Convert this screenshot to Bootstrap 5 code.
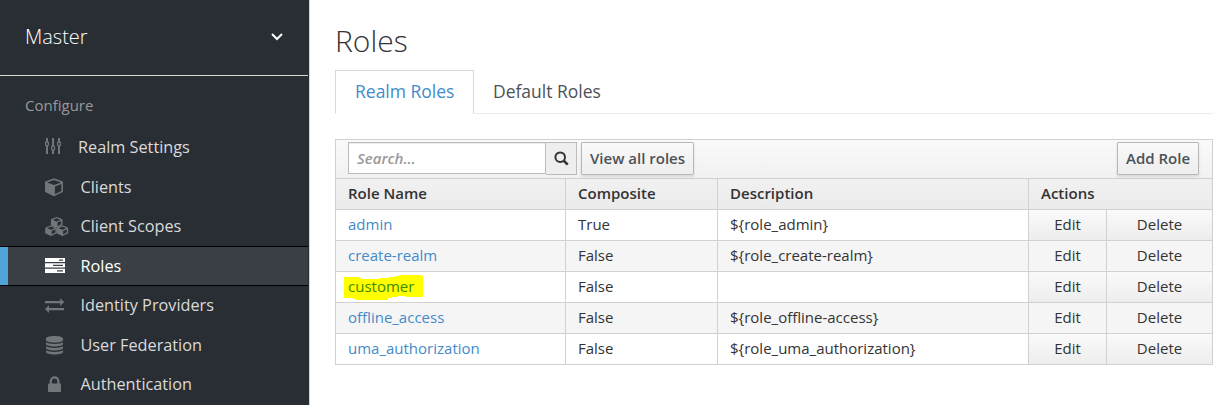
<!DOCTYPE html>
<html lang="en">
<head>
<meta charset="utf-8">
<title>Roles</title>
<meta name="viewport" content="width=device-width, initial-scale=1">
<link href="https://cdn.jsdelivr.net/npm/bootstrap@5.3.0/dist/css/bootstrap.min.css" rel="stylesheet">
<style>
  body { font-family: "Open Sans", sans-serif; font-size: 15px; line-height: 20px; color: #333; height: 405px; overflow: hidden; background: #fff; }
  a { text-decoration: none; }
  .side { width: 310px; height: 405px; background: #292e34; border-right: 1px solid #d1d1d1; padding-right: 1px; }
  .realm { height: 76px; border-bottom: 1px solid #d3dccf; padding: 0 24px 2px 25px; font-size: 20px; font-weight: 300; color: #fff; }
  .side-title { font-size: 15px; color: #999; padding: 18px 0 0 25px; height: 51px; line-height: 22px; }
  .side .nav-link { height: 39.5px; padding: 0 0 0 45px; color: #dbdada; font-size: 16.25px; line-height: 22px; }
  .side .nav-link svg { width: 24px; height: 20px; margin-right: 11.5px; fill: #72767b; flex: none; overflow: visible; }
  .side .nav-link:first-child svg { margin-right: 9px; }
  .side .nav-link:nth-child(2) { padding-top: 1px; }
  .side .nav-link.active { background: #393f44; border: solid #000; border-width: 1px 0; box-shadow: inset 8px 0 #4fa5d9; color: #fff; height: 40px; }
  .side .nav-link.active svg { fill: #fff; }
  .main-area { padding: 21px 14px 0 25px; }
  h1 { font-size: 30px; font-weight: 300; line-height: 40px; margin: 0 0 9px; color: #333; }
  .nav-tabs { height: 44px; border-bottom: 1px solid #ececec; }
  .nav-tabs .nav-link { border-radius: 0; font-size: 17.5px; line-height: 24px; padding: 8px 19px 10px; color: #4d5258; height: 44px; }
  .nav-tabs .nav-link.active { color: #428bca; border-color: #d8d8d8 #d8d8d8 #fff; }
  .nav-tabs .nav-link:not(.active) { padding-left: 17.5px; }
  .roles { margin-top: 25px; width: 878px; table-layout: fixed; border-collapse: separate; border-spacing: 0; border: solid #d1d1d1; border-width: 1px 0 0 1px; }
  .roles th, .roles td { height: 31px; padding: 0 12px 2px; border: solid #d1d1d1; border-width: 0 1px 1px 0; font-weight: 400; vertical-align: middle; line-height: 20px; }
  .roles th { font-weight: 600; background: linear-gradient(#f1f1f1, #ebebeb); }
  .roles .bar { height: 39px; background: linear-gradient(#fafafa, #f1f1f1); vertical-align: top; padding: 2px 13px 0 12px; }
  .roles tbody tr:nth-child(even) td { background: #f5f5f5; }
  .roles tbody td.act { background: linear-gradient(#fafafa, #ededed); text-align: center; padding: 0 0 2px; }
  .roles tbody a { color: #428bca; }
  .find { width: 198px; height: 32px; border: 1px solid #bbb; border-radius: 0; padding: 0 8px; font-size: 15px; font-weight: 600; font-style: italic; box-shadow: inset 0 1px 1px rgba(0,0,0,.075); }
  .find::placeholder { color: #999; opacity: 1; }
  .find-btn { width: 31px; height: 33px; border: 1px solid #bbb; border-left: 0; background: #eee; padding: 0 0 1px; }
  .tool { height: 33px; border: 1px solid #b7b7b7; border-radius: 1px; background: linear-gradient(#fafafa, #ededed); box-shadow: 0 2px 3px rgba(0,0,0,.1); color: #4d5258; font-weight: 600; font-size: 15px; line-height: 20px; padding: 0 8px 2px; }
  .hl { position: relative; z-index: 0; }
  .hl svg { position: absolute; left: -4px; top: -1px; z-index: -1; }
  .roles tbody a.hl { color: #428b00; }
</style>
</head>
<body class="d-flex">
<nav class="side flex-shrink-0">
  <div class="realm d-flex align-items-center justify-content-between">
    <span>Master</span>
    <svg width="14" height="10" viewBox="0 0 14 10" fill="none" stroke="#fff" stroke-width="2"><path d="M2 2l5 5 5-5"/></svg>
  </div>
  <div class="side-title">Configure</div>
  <div class="nav flex-column flex-nowrap">
    <a class="nav-link d-flex align-items-center" href="#"><svg viewBox="0 0 24 20"><path d="M1 1h2v4H1zM1 9h2v8H1zM7 1h2v8H7zM7 13h2v4H7zM13 1h2v4h-2zM13 9h2v8h-2z"/><g fill="none" stroke="#72767b" stroke-width="1.300"><rect x=".6" y="5" width="2.900" height="3.600" rx="1"/><rect x="6.600" y="9" width="2.900" height="4" rx="1"/><rect x="12.600" y="5" width="2.900" height="3.600" rx="1"/></g></svg>Realm Settings</a>
    <a class="nav-link d-flex align-items-center" href="#"><svg viewBox="0 0 24 20"><path fill-rule="evenodd" d="M9 1.200l8.200 3a1.200 1.200 0 0 1 .8 1.100v9a1.200 1.200 0 0 1-.6 1l-8.400 4-8.400-4a1.200 1.200 0 0 1-.6-1v-9a1.200 1.200 0 0 1 .8-1.100zM9 2.900L2 5.400l7 2.700 7-2.700zM9.900 9.500v7.800l6.500-3.200V7z"/></svg>Clients</a>
    <a class="nav-link d-flex align-items-center" href="#"><svg viewBox="0 0 24 20"><defs><path id="box" fill-rule="evenodd" d="M6 0l5.200 2.100q.6.300.6.900v4.400q0 .5-.5.800L6 10.700.7 8.200q-.5-.3-.5-.8V3q0-.6.600-.9zM6 1.300L2.200 2.900 6 4.500l3.800-1.600zM6.700 5.600v3.300l3.700-1.700V4z"/></defs><use href="#box" x="5.700" y="1"/><use href="#box" y="9.300"/><use href="#box" x="11.400" y="9.300"/></svg>Client Scopes</a>
    <a class="nav-link active d-flex align-items-center" href="#"><svg viewBox="0 0 24 20"><path fill-rule="evenodd" d="M0 2h20v4H0zM14 3.500v1.200h4V3.500zM0 7.300h20v4.200H0zM8 8.800V10h10V8.800zM0 12.800h20v4.200H0zM12 14.300v1.200h6v-1.200z"/></svg>Roles</a>
    <a class="nav-link d-flex align-items-center" href="#"><svg viewBox="0 0 24 20"><path d="M0 6h15.200V3.200l4 3.900-4 3.900V8.300H0zM19 13H4v-2.800l-4 3.900L4 18v-2.700h15z"/></svg>Identity Providers</a>
    <a class="nav-link d-flex align-items-center" href="#"><svg viewBox="0 0 24 20"><path d="M1 3.500C1 0 18 0 18 3.500V5c0 3.500-17 3.500-17 0zM1 7.200c3 2.300 14 2.300 17 0v1.800c0 3.300-17 3.300-17 0zM1 11.200c3 2.300 14 2.300 17 0v1.800c0 3.300-17 3.300-17 0zM1 15.200c3 2.300 14 2.300 17 0V17c0 3.300-17 3.300-17 0z"/></svg>User Federation</a>
    <a class="nav-link d-flex align-items-center" href="#"><svg viewBox="0 0 24 20"><path fill-rule="evenodd" d="M4.700 9.500V7.200a4.900 4.900 0 0 1 9.800 0v2.300h.5q1 0 1 1v6.600q0 1-1 1H4q-1 0-1-1v-6.600q0-1 1-1zM6.900 9.500h5.400V7.200a2.700 2.700 0 0 0-5.400 0z"/></svg>Authentication</a>
  </div>
</nav>
<main class="main-area flex-grow-1">
  <h1>Roles</h1>
  <ul class="nav nav-tabs">
    <li class="nav-item"><a class="nav-link active" href="#">Realm Roles</a></li>
    <li class="nav-item"><a class="nav-link" href="#">Default Roles</a></li>
  </ul>
  <table class="roles">
    <colgroup><col style="width:230px"><col style="width:152px"><col style="width:311px"><col style="width:78px"><col style="width:106px"></colgroup>
    <thead>
      <tr><td class="bar" colspan="5">
        <div class="d-flex align-items-start">
          <input class="find form-control" type="text" placeholder="Search...">
          <button class="find-btn d-flex align-items-center justify-content-center" type="button" aria-label="Search"><svg width="15" height="15" viewBox="0 0 15 15" fill="none" stroke="#333" stroke-width="2"><circle cx="6.200" cy="6.200" r="4.800"/><path d="M9.700 9.700l4 4" stroke-width="2.600"/></svg></button>
          <button class="tool ms-1" type="button">View all roles</button>
          <button class="tool ms-auto" type="button">Add Role</button>
        </div>
      </td></tr>
      <tr><th>Role Name</th><th>Composite</th><th>Description</th><th colspan="2">Actions</th></tr>
    </thead>
    <tbody>
      <tr><td><a href="#">admin</a></td><td>True</td><td>${role_admin}</td><td class="act">Edit</td><td class="act">Delete</td></tr>
      <tr><td><a href="#">create-realm</a></td><td>False</td><td>${role_create-realm}</td><td class="act">Edit</td><td class="act">Delete</td></tr>
      <tr><td><a class="hl d-inline-block" href="#"><svg width="79" height="26" viewBox="0 0 79 26"><path fill="#ff0" d="M0 2h16v1h2v1h18V3h9V2h6V1h4V0h22v1h2v21H62v-1h-9v1h-5v1h-4v2H12v-1H9v-1H0z"/></svg>customer</a></td><td>False</td><td></td><td class="act">Edit</td><td class="act">Delete</td></tr>
      <tr><td><a href="#">offline_access</a></td><td>False</td><td>${role_offline-access}</td><td class="act">Edit</td><td class="act">Delete</td></tr>
      <tr><td><a href="#">uma_authorization</a></td><td>False</td><td>${role_uma_authorization}</td><td class="act">Edit</td><td class="act">Delete</td></tr>
    </tbody>
  </table>
</main>
<script src="https://cdn.jsdelivr.net/npm/bootstrap@5.3.0/dist/js/bootstrap.bundle.min.js"></script>
</body>
</html>
